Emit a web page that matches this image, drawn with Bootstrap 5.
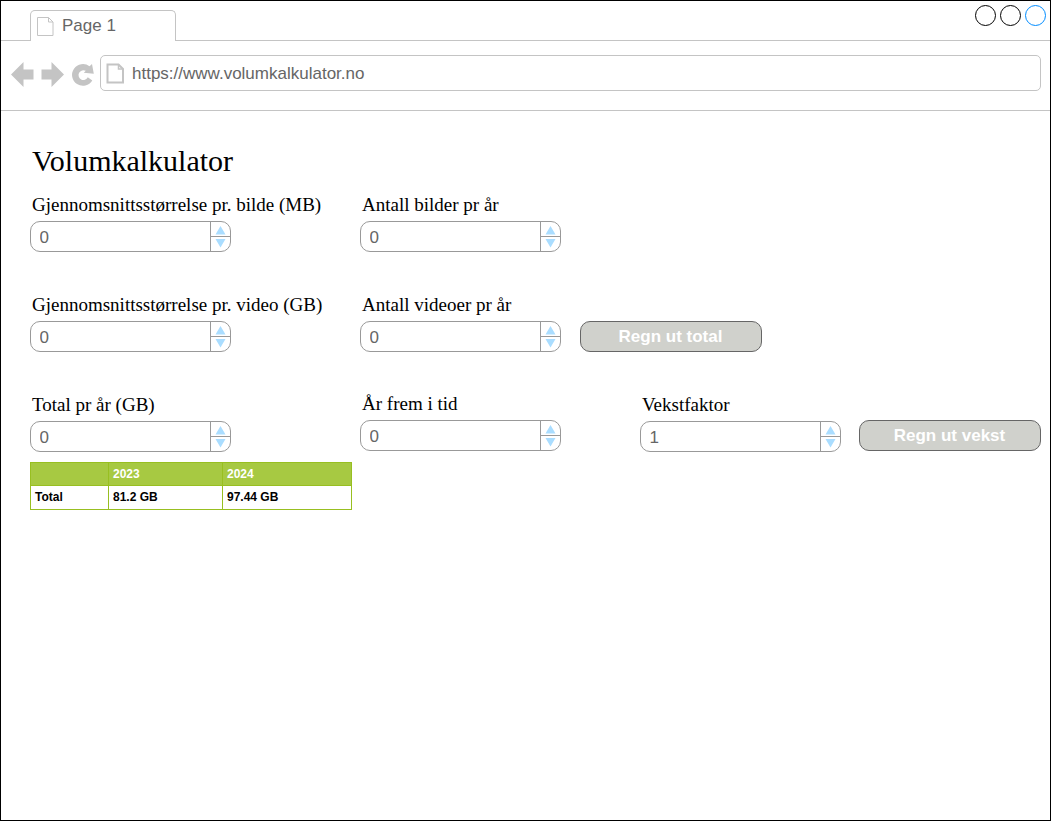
<!DOCTYPE html>
<html lang="no">
<head>
<meta charset="utf-8">
<meta name="viewport" content="width=device-width, initial-scale=1">
<title>Volumkalkulator</title>
<link href="https://cdn.jsdelivr.net/npm/bootstrap@5.3.0/dist/css/bootstrap.min.css" rel="stylesheet">
<style>
  body { font-family: "Liberation Sans", Arial, sans-serif; color: #000; background: #fff; line-height: 1.2; }
  .window { height: 821px; border: 1px solid #000; }
  .tabstrip { height: 40px; padding: 9px 0 0 29px; box-shadow: inset 0 -1px #c4c4c4; }
  .page-tab { width: 146px; height: 31px; padding: 0 0 0 6px; border: 1px solid #c4c4c4; border-bottom: 0; border-radius: 5px 5px 0 0; background: #fff; font-size: 17px; color: #666; }
  .page-tab span { margin-left: 8px; }
  .controls { margin: -6px 3px 0 0; gap: 2px; }
  .toolbar { height: 70px; padding: 14px 9px 19px 9px; border-bottom: 1px solid #c4c4c4; }
  .address { height: 36px; border: 1px solid #c4c4c4; border-radius: 5px; padding-left: 5px; font-size: 17px; color: #666; }
  .address span { margin-left: 7px; padding-top: 2px; }
  .content { padding: 30px 9px 0 29px; }
  h1 { font: 30px/40px "Liberation Serif", "Times New Roman", serif; padding-left: 2px; margin: 0 0 10px; }
  .calc-row { height: 100px; }
  .col-a { width: 330px; }
  .col-b { width: 280px; }
  .col-b-narrow { width: 220px; }
  .col-c { width: 219px; }
  .field label { display: block; height: 30px; padding-left: 2px; font: 19px/28px "Liberation Serif", "Times New Roman", serif; white-space: nowrap; }
  .spin { width: 201px; height: 31px; border: 1px solid #999; border-radius: 10px; overflow: hidden; }
  .spin .form-control { font-size: 17px; line-height: 20px; color: #666; padding: 2px 0 0 8.5px; border: 0; background: none; min-width: 0; }
  .spin svg { flex: none; }
  .action { padding-top: 30px; }
  .btn-calc { display: block; width: 182px; height: 31px; padding: 0 1px 0 0; font-size: 17px; font-weight: 700; line-height: 29px; color: #fff; background: #d0d1cc; border: 1px solid #666; border-radius: 10px; }
  .raised { margin-top: -1px; }
  .table.result { width: 322px; height: 48px; margin: -29px 0 0; table-layout: fixed; border-color: #98bf21; font-size: 12px; font-weight: 700; line-height: 14px; }
  .table.result th, .table.result td { border: 1px solid #98bf21 !important; padding: 0 4px; height: 24px; vertical-align: middle; color: #000; box-shadow: none; }
  .table.result thead th { background: #a7c942; color: #fff; height: 23px; }
  .table.result tbody th, .table.result tbody td { padding-bottom: 2px; }
</style>
</head>
<body>
<svg width="0" height="0" class="position-absolute" aria-hidden="true">
  <symbol id="steps" viewBox="0 0 21 29">
    <path d="M.5 0V29M0 14.500H21" fill="none" stroke="#999"/>
    <path d="M5.500 12.500L10.500 4L15.500 12.500ZM5.500 17L10.500 25.500L15.500 17Z" fill="#adf"/>
  </symbol>
</svg>
<div class="window">
  <div class="tabstrip d-flex justify-content-between">
    <div class="page-tab d-flex align-items-center">
      <svg width="17" height="20" viewBox="0 0 17 20" fill="none" stroke="#c4c4c4"><path d="M.5 1.500H11.500L16 6V19.500H.5ZM11.500 1.500V6H16"/></svg>
      <span>Page 1</span>
    </div>
    <div class="controls d-flex">
      <svg width="23" height="23" fill="none" stroke="#000"><circle cx="11.500" cy="11.500" r="10"/></svg>
      <svg width="23" height="23" fill="none" stroke="#000"><circle cx="11.500" cy="11.500" r="10"/></svg>
      <svg width="23" height="23" fill="none" stroke="#008cff"><circle cx="11.500" cy="11.500" r="10"/></svg>
    </div>
  </div>
  <div class="toolbar d-flex">
    <svg class="flex-shrink-0" width="90" height="36" viewBox="10 55 90 36" fill="#c4c4c4">
      <path d="M11 74.500L23.500 62V69.500H33.500V79.500H23.500V87Z"/>
      <path d="M64 74.500L51.500 62V69.500H41.500V79.500H51.500V87Z"/>
      <path d="M92.300 80.500A10.900 10.900 0 1 1 89.500 66.200L92 64L93.800 73.700L83.800 72.800L85.800 70.800A4.900 4.900 0 1 0 87.800 77.300Z"/>
    </svg>
    <div class="address d-flex align-items-center flex-grow-1">
      <svg width="19" height="21" viewBox="0 0 19 21" fill="none" stroke="#c4c4c4" stroke-width="2"><path d="M1.500 1.500H12.500L17 6V19.500H1.500Z"/><path d="M12.500 1.500V6H17" stroke-width="1.500"/></svg>
      <span>https://www.volumkalkulator.no</span>
    </div>
  </div>
  <main class="content">
    <h1>Volumkalkulator</h1>
    <div class="calc-row d-flex">
      <div class="field col-a"><label for="f1">Gjennomsnittsstørrelse pr. bilde (MB)</label>
        <div class="spin d-flex"><input id="f1" class="form-control" value="0"><svg width="20" height="29" viewBox="0 0 20 29"><use href="#steps" width="21" height="29"/></svg></div></div>
      <div class="field"><label for="f2">Antall bilder pr år</label>
        <div class="spin d-flex"><input id="f2" class="form-control" value="0"><svg width="20" height="29" viewBox="0 0 20 29"><use href="#steps" width="21" height="29"/></svg></div></div>
    </div>
    <div class="calc-row d-flex">
      <div class="field col-a"><label for="f3">Gjennomsnittsstørrelse pr. video (GB)</label>
        <div class="spin d-flex"><input id="f3" class="form-control" value="0"><svg width="20" height="29" viewBox="0 0 20 29"><use href="#steps" width="21" height="29"/></svg></div></div>
      <div class="field col-b-narrow"><label for="f4">Antall videoer pr år</label>
        <div class="spin d-flex"><input id="f4" class="form-control" value="0"><svg width="20" height="29" viewBox="0 0 20 29"><use href="#steps" width="21" height="29"/></svg></div></div>
      <div class="action"><button class="btn btn-calc" type="button">Regn ut total</button></div>
    </div>
    <div class="calc-row d-flex">
      <div class="field col-a"><label for="f5">Total pr år (GB)</label>
        <div class="spin d-flex"><input id="f5" class="form-control" value="0"><svg width="20" height="29" viewBox="0 0 20 29"><use href="#steps" width="21" height="29"/></svg></div></div>
      <div class="field col-b raised"><label for="f6">År frem i tid</label>
        <div class="spin d-flex"><input id="f6" class="form-control" value="0"><svg width="20" height="29" viewBox="0 0 20 29"><use href="#steps" width="21" height="29"/></svg></div></div>
      <div class="field col-c"><label for="f7">Vekstfaktor</label>
        <div class="spin d-flex"><input id="f7" class="form-control" value="1"><svg width="20" height="29" viewBox="0 0 20 29"><use href="#steps" width="21" height="29"/></svg></div></div>
      <div class="action raised"><button class="btn btn-calc" type="button">Regn ut vekst</button></div>
    </div>
    <table class="table result">
      <colgroup><col style="width:78px"><col style="width:114px"><col style="width:129px"></colgroup>
      <thead><tr><th></th><th>2023</th><th>2024</th></tr></thead>
      <tbody><tr><th>Total</th><td>81.2 GB</td><td>97.44 GB</td></tr></tbody>
    </table>
  </main>
</div>
<script src="https://cdn.jsdelivr.net/npm/bootstrap@5.3.0/dist/js/bootstrap.bundle.min.js"></script>
</body>
</html>
